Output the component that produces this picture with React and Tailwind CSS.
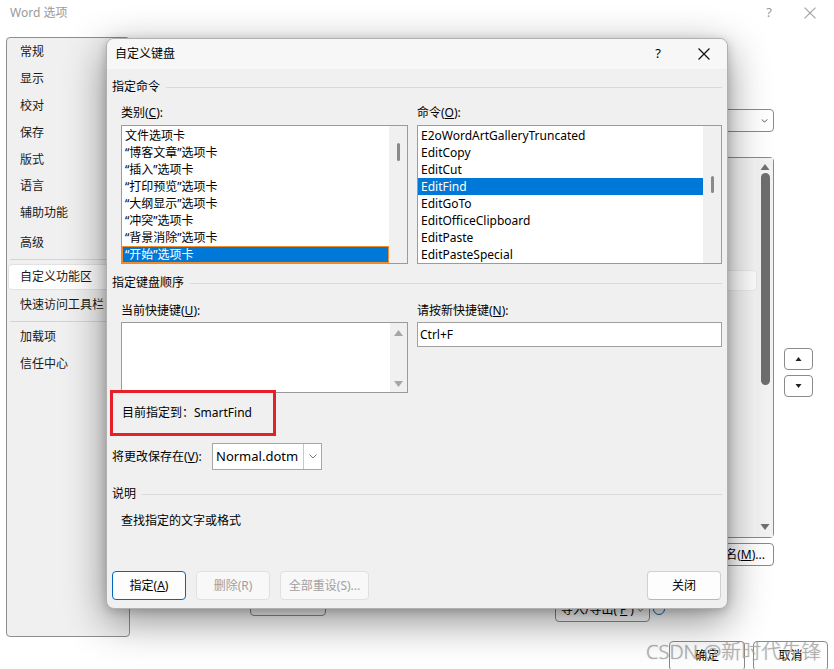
import React from "react";

const FONT = "[font-family:'Noto_Sans','Noto_Sans_CJK_SC',sans-serif]";

function TriUp({ color = "#a6a6a6", w = 9, h = 6 }) {
  return (
    <svg width={w} height={h} viewBox="0 0 9 6" className="block">
      <polygon points="0,6 4.5,0 9,6" fill={color} />
    </svg>
  );
}

function TriDown({ color = "#a6a6a6", w = 9, h = 6 }) {
  return (
    <svg width={w} height={h} viewBox="0 0 9 6" className="block">
      <polygon points="0,0 9,0 4.5,6" fill={color} />
    </svg>
  );
}

function XMark({ size = 11, color = "#000", sw = 1 }) {
  return (
    <svg width={size} height={size} viewBox="0 0 11 11" className="block">
      <path d="M0.5 0.5L10.5 10.5M10.5 0.5L0.5 10.5" stroke={color} strokeWidth={sw} fill="none" />
    </svg>
  );
}

function Chevron({ color = "#555", w = 8, h = 5 }) {
  return (
    <svg width={w} height={h} viewBox="0 0 8 5" className="block">
      <path d="M0.5 0.5L4 4L7.5 0.5" stroke={color} strokeWidth="1" fill="none" />
    </svg>
  );
}

function Section({ title }) {
  return (
    <div className="h-[18px] flex items-center gap-[6px]">
      <span className="whitespace-nowrap">{title}</span>
      <div className="flex-1 h-px bg-[#d9d9d9]" />
    </div>
  );
}

function ListBox({ items, selected, focusRing, thumbClass }) {
  return (
    <div className="h-[139px] border border-[#9b9b9b] bg-white flex">
      <div className="flex-1 flex flex-col overflow-hidden pt-[1px]">
        {items.map((t, i) => (
          <div
            key={i}
            className={
              "h-[17px] leading-[17px] whitespace-nowrap pl-[3px] " +
              (i === selected
                ? "bg-[#0078d7] text-white " + (focusRing ? "shadow-[inset_0_0_0_1px_#f08c2a]" : "")
                : "")
            }
          >
            {t}
          </div>
        ))}
      </div>
      <div className="w-[18px] bg-[#f0f0f0] flex justify-center">
        <div className={"w-[3px] rounded-full bg-[#8a8a8a] " + thumbClass} />
      </div>
    </div>
  );
}

function Btn({ children, className = "" }) {
  return (
    <div
      className={
        "h-[29px] rounded-[4px] border flex items-center justify-center whitespace-nowrap " + className
      }
    >
      {children}
    </div>
  );
}

export default function App() {
  const categories = [
    "文件选项卡",
    "“博客文章”选项卡",
    "“插入”选项卡",
    "“打印预览”选项卡",
    "“大纲显示”选项卡",
    "“冲突”选项卡",
    "“背景消除”选项卡",
    "“开始”选项卡",
  ];
  const commands = [
    "E2oWordArtGalleryTruncated",
    "EditCopy",
    "EditCut",
    "EditFind",
    "EditGoTo",
    "EditOfficeClipboard",
    "EditPaste",
    "EditPasteSpecial",
  ];
  const sideTop = ["常规", "显示", "校对", "保存", "版式", "语言", "辅助功能"];

  return (
    <div className={"relative w-[834px] h-[669px] overflow-hidden bg-white text-[12px] " + FONT}>
      {/* Word options window title */}
      <div className="h-[25px] flex items-center pl-[10px] text-[#9a9a9a]">
        <span>Word 选项</span>
        <div className="ml-auto flex items-center">
          <span className="w-[20px] text-center text-[13px] text-[#9a9a9a]">?</span>
          <div className="ml-[25px] mr-[18px]">
            <XMark size={12} color="#a0a0a0" sw={1} />
          </div>
        </div>
      </div>

      {/* Word options body */}
      <div className="mt-[12px] flex">
        {/* sidebar */}
        <div className="ml-[6px] w-[124px] h-[600px] shrink-0 rounded-[4px] border border-[#8e8e8e] bg-[#f0f0f0] flex flex-col pt-[1px] text-[#1a1a1a]">
          {sideTop.map((t) => (
            <div key={t} className="h-[26.8px] flex items-center pl-[13px]">
              {t}
            </div>
          ))}
          <div className="mt-[3px] h-[27px] flex items-center pl-[13px]">高级</div>
          <div className="mt-[2px] ml-[3px] h-px bg-[#d4d4d4]" />
          <div className="mt-[4px] ml-[1px] h-[26px] rounded-[4px] border border-[#e2e2e2] bg-white flex items-center pl-[11px]">
            自定义功能区
          </div>
          <div className="mt-[2px] h-[27px] flex items-center pl-[13px] whitespace-nowrap">快速访问工具栏</div>
          <div className="mt-[2px] ml-[3px] h-px bg-[#d4d4d4]" />
          <div className="mt-[2px] h-[27px] flex items-center pl-[13px]">加载项</div>
          <div className="h-[27px] flex items-center pl-[13px]">信任中心</div>
        </div>

        {/* main area (mostly behind dialog) */}
        <div className="flex-1 flex flex-col">
          <div className="mt-[72px] self-end mr-[60px] w-[240px] h-[23px] rounded-[4px] border border-[#8a8a8a] bg-white flex items-center justify-end pr-[5px]">
            <Chevron color="#333" w={7} h={4} />
          </div>

          <div className="mt-[25px] flex justify-end pr-[21px]">
            <div className="w-[300px] h-[381px] rounded-[4px] border border-[#8a8a8a] bg-[#f6f6f6] flex">
              <div className="flex-1 flex flex-col">
                <div className="mt-[112px] h-[21px] rounded-[4px] bg-white border border-[#ececec]" />
              </div>
              <div className="w-[16px] bg-[#f3f3f3] flex flex-col items-center">
                <div className="mt-[6px]">
                  <TriUp color="#707070" w={10} h={6} />
                </div>
                <div className="mt-[3px] w-[9px] h-[212px] rounded-full bg-[#6e6e6e]" />
                <div className="flex-1" />
                <div className="mb-[7px]">
                  <TriDown color="#707070" w={10} h={6} />
                </div>
              </div>
            </div>
            <div className="ml-[10px] pt-[191px] flex flex-col gap-[5px]">
              <div className="w-[29px] h-[22px] rounded-[4px] border border-[#8a8a8a] bg-white flex items-center justify-center">
                <TriUp color="#222" w={7} h={4} />
              </div>
              <div className="w-[29px] h-[22px] rounded-[4px] border border-[#8a8a8a] bg-white flex items-center justify-center">
                <TriDown color="#222" w={7} h={4} />
              </div>
            </div>
          </div>

          <div className="mt-[5px] self-end mr-[60px] w-[82px] h-[23px] rounded-[4px] border border-[#8a8a8a] bg-white flex items-center justify-center whitespace-nowrap">
            重命名(<span className="underline">M</span>)...
          </div>

          <div className="mt-[32px] flex items-start">
            <div className="ml-[120px] w-[76px] h-[18px] rounded-[4px] border border-[#8a8a8a] bg-white" />
            <div className="ml-[229px] w-[95px] h-[24px] rounded-[4px] border border-[#8a8a8a] bg-white flex items-center justify-center gap-[3px] whitespace-nowrap">
              导入/导出(<span className="underline">P</span>)
              <Chevron color="#333" w={7} h={4} />
            </div>
            <div className="ml-[3px] mt-[5px] w-[12px] h-[12px] rounded-full border border-[#0067c0]" />
          </div>

          <div className="mt-[19px] flex justify-end pr-[6px] gap-[8px]">
            <div className="w-[76px] h-[30px] rounded-[4px] border border-[#8a8a8a] bg-[#fdfdfd] flex items-center justify-center">
              确定
            </div>
            <div className="w-[75px] h-[30px] rounded-[4px] border border-[#8a8a8a] bg-[#fdfdfd] flex items-center justify-center">
              取消
            </div>
          </div>
        </div>
      </div>

      {/* CSDN watermark */}
      <div className="absolute left-[646px] top-[637px] text-[20px] font-light whitespace-nowrap text-[rgba(175,175,175,0.85)] [text-shadow:0_0_1px_rgba(90,90,90,0.5)]">
        CSDN @新时代先锋
      </div>

      {/* Customize keyboard dialog */}
      <div className="absolute left-[106px] top-[38px] w-[622px] h-[571px] rounded-[8px] border border-[#b0b0b0] bg-[#f0f0f0] flex flex-col overflow-hidden text-black shadow-[0_12px_40px_rgba(0,0,0,0.45),0_2px_10px_rgba(0,0,0,0.18)]">
        {/* title bar */}
        <div className="h-[30px] bg-[#f7f7f7] flex items-center pl-[8px]">
          <span>自定义键盘</span>
          <div className="ml-auto flex h-full">
            <div className="w-[46px] h-full flex items-center justify-center text-[13px]">?</div>
            <div className="w-[46px] h-full flex items-center justify-center">
              <XMark size={12} color="#111" sw={1.1} />
            </div>
          </div>
        </div>

        {/* body */}
        <div className="flex-1 flex flex-col px-[5px] pt-[9px] pb-[8px]">
          <Section title="指定命令" />
          <div className="pl-[9px] grid grid-cols-[287px_305px] gap-x-[9px]">
            <div className="mt-[8px] h-[17px] leading-[17px]">
              类别(<span className="underline">C</span>):
            </div>
            <div className="mt-[8px] h-[17px] leading-[17px]">
              命令(<span className="underline">O</span>):
            </div>
            <div className="mt-[4px]">
              <ListBox items={categories} selected={7} focusRing thumbClass="mt-[17px] h-[18px]" />
            </div>
            <div className="mt-[4px]">
              <ListBox items={commands} selected={3} thumbClass="mt-[50px] h-[17px]" />
            </div>
          </div>

          <div className="mt-[10px]">
            <Section title="指定键盘顺序" />
          </div>
          <div className="pl-[9px] grid grid-cols-[287px_305px] gap-x-[9px]">
            <div className="mt-[10px] h-[17px] leading-[17px]">
              当前快捷键(<span className="underline">U</span>):
            </div>
            <div className="mt-[10px] h-[17px] leading-[17px]">
              请按新快捷键(<span className="underline">N</span>):
            </div>
            <div className="mt-[3px] h-[71px] border border-[#9b9b9b] bg-white flex">
              <div className="flex-1" />
              <div className="w-[17px] bg-[#f0f0f0] flex flex-col items-center justify-between pt-[7px] pb-[5px]">
                <TriUp />
                <TriDown />
              </div>
            </div>
            <div className="mt-[3px] self-start h-[25px] border border-[#a0a0a0] bg-white flex items-center pl-[2px]">
              Ctrl+F
            </div>
          </div>

          <div className="relative -mt-[3px] -ml-[2px] w-[166px] h-[46px] border-[3px] border-[#e5202a] flex items-center pl-[9px] whitespace-nowrap">
            目前指定到：SmartFind
          </div>

          <div className="mt-[7px] h-[27px] flex items-center">
            <div className="w-[100px] whitespace-nowrap">
              将更改保存在(<span className="underline">V</span>):
            </div>
            <div className="w-[110px] h-[27px] border border-[#a6a6a6] bg-white flex">
              <div className="flex-1 flex items-center pl-[3px] text-[13px]">Normal.dotm</div>
              <div className="w-[18px] border-l border-[#c8c8c8] flex items-center justify-center">
                <Chevron color="#777" w={8} h={5} />
              </div>
            </div>
          </div>

          <div className="mt-[15px]">
            <Section title="说明" />
          </div>
          <div className="mt-[9px] pl-[9px] h-[17px] leading-[17px]">查找指定的文字或格式</div>

          <div className="mt-auto flex gap-[10px]">
            <Btn className="w-[74px] border-[#0067c0] bg-[#fdfdfd]">
              指定(<span className="underline">A</span>)
            </Btn>
            <Btn className="w-[74px] border-[#e0e0e0] bg-[#f8f8f8] text-[#a0a0a0]">删除(R)</Btn>
            <Btn className="w-[89px] border-[#e0e0e0] bg-[#f8f8f8] text-[#a0a0a0]">全部重设(S)...</Btn>
            <Btn className="ml-auto mr-[1px] w-[74px] border-[#d0d0d0] border-b-[#b8b8b8] bg-[#fdfdfd]">关闭</Btn>
          </div>
        </div>
      </div>
    </div>
  );
}
